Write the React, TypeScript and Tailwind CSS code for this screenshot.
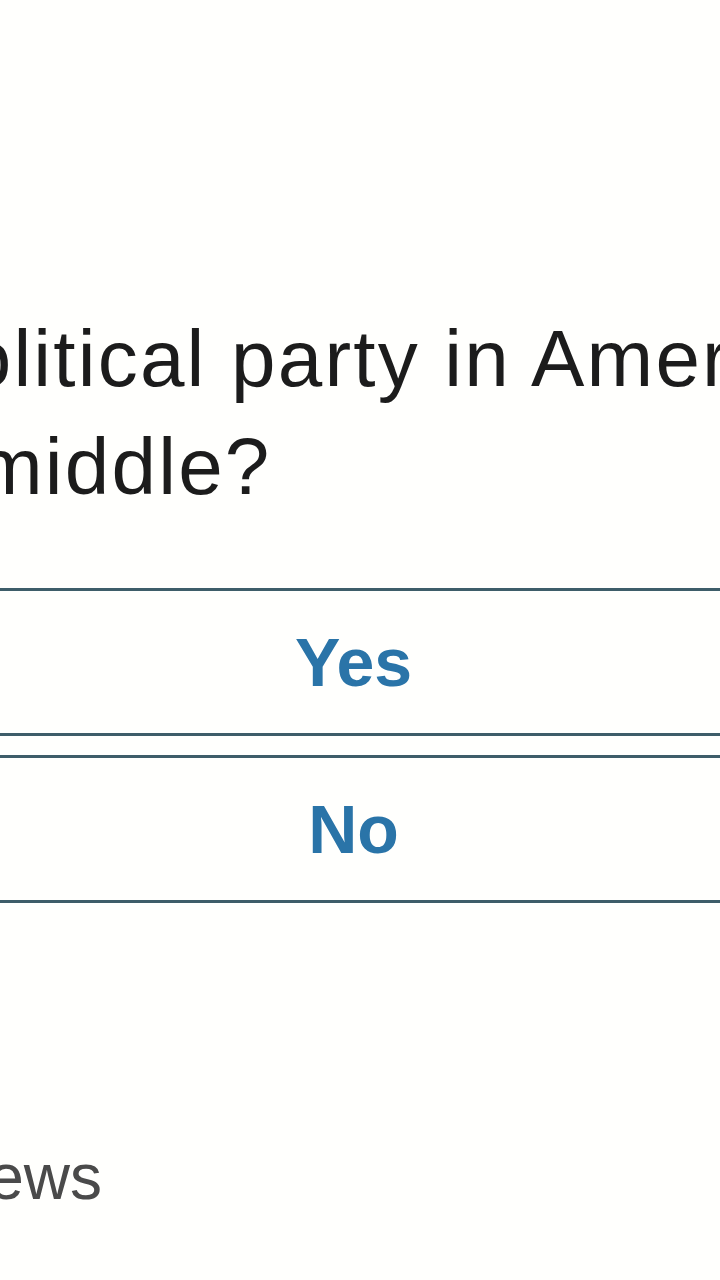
export default function App() {
  return (
    <div className="w-[720px] h-[1280px] overflow-hidden bg-[#fffffd]">
      <div className="pt-[305px] font-['Liberation_Sans',Arial,sans-serif] text-[80px] leading-[108px] tracking-[2.2px] text-[#1c1c1c] whitespace-nowrap">
        <div className="ml-[-80px]">political party in America</div>
        <div className="ml-[-24px]">middle?</div>
      </div>
      <div className="mt-[67px] ml-[-20px] w-[747px] font-['Liberation_Sans',Arial,sans-serif] font-bold text-[68px] leading-none text-[#2a74a8]">
        <button className="w-full h-[148px] flex items-center justify-center border-y-[3px] border-[#3e5d69] bg-transparent">
          Yes
        </button>
        <button className="mt-[19px] w-full h-[148px] flex items-center justify-center border-y-[3px] border-[#3e5d69] bg-transparent">
          No
        </button>
      </div>
      <div className="mt-[242px] ml-[-58px] font-['Liberation_Sans',Arial,sans-serif] text-[64px] leading-none text-[#4a4a4a] whitespace-nowrap">
        News
      </div>
    </div>
  );
}
